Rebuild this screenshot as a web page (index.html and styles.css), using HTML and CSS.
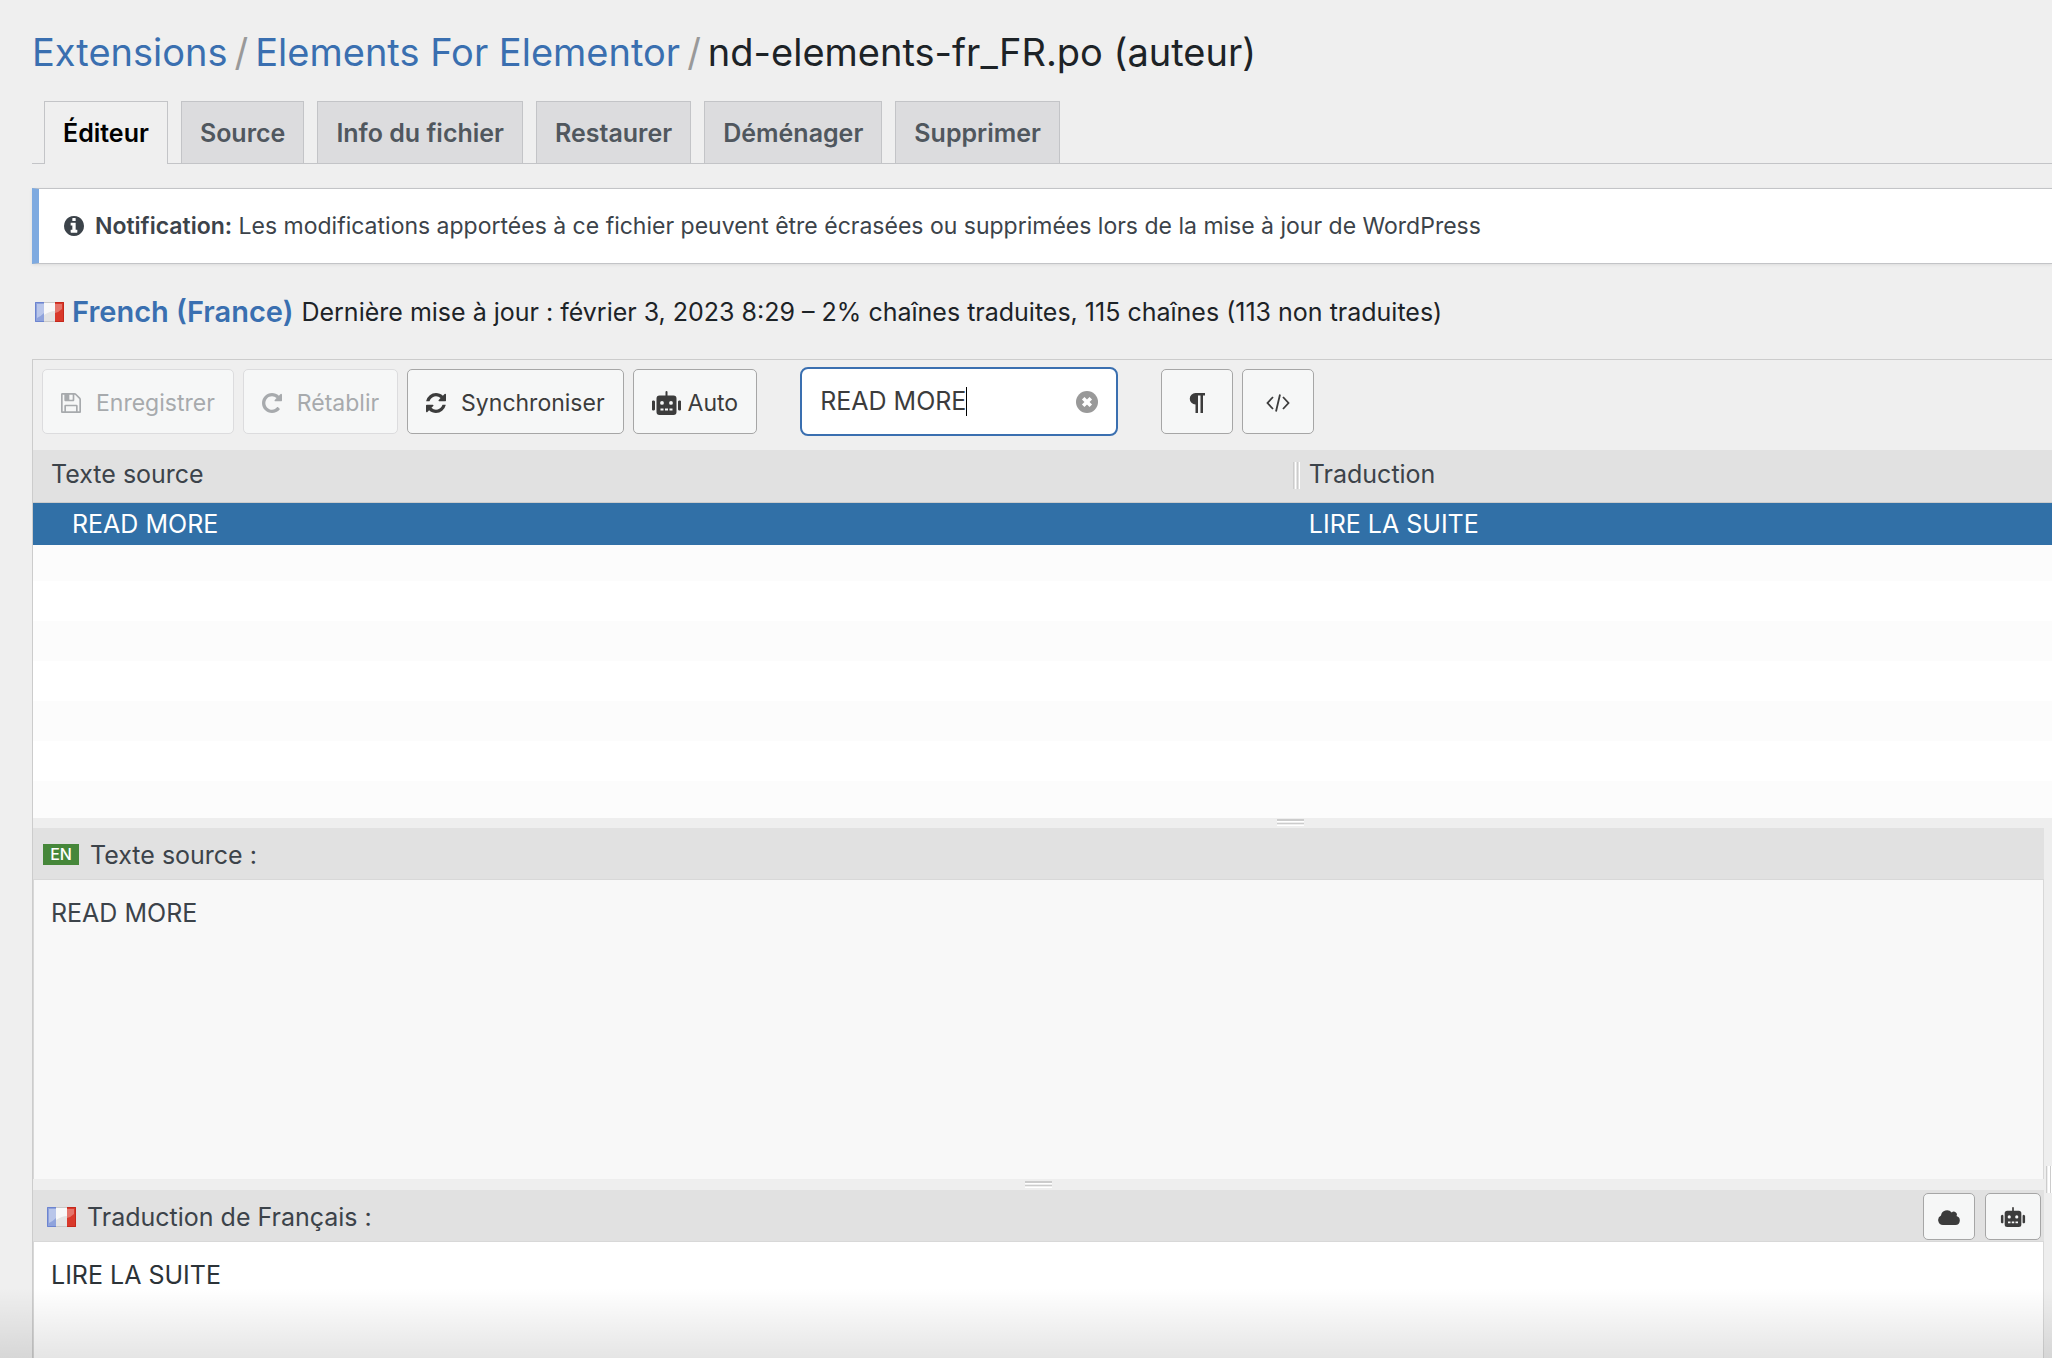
FILE: index.html
```html
<!DOCTYPE html>
<html lang="fr">
<head>
  <meta charset="UTF-8" />
  <meta name="viewport" content="width=device-width, initial-scale=1.0"/>
  <title>nd-elements-fr_FR.po (auteur)</title>
  <link rel="stylesheet" href="styles.css">
</head>
<body>

  <!-- shared icons -->
  <svg class="sprite" aria-hidden="true">
    <symbol id="robot" viewBox="0 0 29 24">
      <path fill-rule="evenodd" d="M13.500 1a1 1 0 0 1 2 0v3.500h6a3 3 0 0 1 3 3V21a3 3 0 0 1-3 3h-14a3 3 0 0 1-3-3V7.500a3 3 0 0 1 3-3h6zM10 10a1.900 1.900 0 1 0 0 3.800 1.900 1.900 0 0 0 0-3.800zm9 0a1.900 1.900 0 1 0 0 3.800 1.900 1.900 0 0 0 0-3.800zM8.500 17.500v2h3v-2zm4.500 0v2h3v-2zm4.500 0v2h3v-2zM0 11.500a1.500 1.500 0 0 1 3-1v8a1.500 1.500 0 0 1-3-1zM26 10.500a1.500 1.500 0 0 1 3 1v6a1.500 1.500 0 0 1-3 1z"/>
    </symbol>
    <symbol id="flag-fr" viewBox="0 0 29 20">
      <rect width="10" height="20" fill="#8fa3dc"/>
      <rect x="9" width="11" height="20" fill="#e4e4e4"/>
      <path d="M9 1h11v8q-5 0-11 4z" fill="#f8f8f8"/>
      <rect x="20" width="9" height="20" fill="#d9392b"/>
      <path d="M2 2h7v9q-4 4-7 5z" fill="#b9c6ea"/>
      <path d="M20 2h7v5q-3 3-7 4z" fill="#e5756b"/>
      <path d="M9 .5h11M9 19.500h11" stroke="#c9c9c9"/>
      <path d="M9 .5H.5v19H9" fill="none" stroke="#6c84d0"/>
      <path d="M20 .5h8.500v19H20" fill="none" stroke="#c4281c"/>
    </symbol>
  </svg>

  <h1>
    <a href="#">Extensions</a>
    <span class="sep">/</span>
    <a href="#">Elements For Elementor</a>
    <span class="sep">/</span>
    <span>nd-elements-fr_FR.po (auteur)</span>
  </h1>

  <nav class="tabs">
    <a href="#" class="tab active">Éditeur</a>
    <a href="#" class="tab">Source</a>
    <a href="#" class="tab">Info du fichier</a>
    <a href="#" class="tab">Restaurer</a>
    <a href="#" class="tab">Déménager</a>
    <a href="#" class="tab">Supprimer</a>
  </nav>

  <div class="notice">
    <svg class="icon" viewBox="0 128 1536 1536"><path d="M1024 1376v-160q0-14-9-23t-23-9h-96v-512q0-14-9-23t-23-9h-320q-14 0-23 9t-9 23v160q0 14 9 23t23 9h96v320h-96q-14 0-23 9t-9 23v160q0 14 9 23t23 9h448q14 0 23-9t9-23zm-128-896v-160q0-14-9-23t-23-9h-192q-14 0-23 9t-9 23v160q0 14 9 23t23 9h192q14 0 23-9t9-23zm640 416q0 209-103 385.500t-279.500 279.500-385.500 103-385.500-103-279.500-279.500-103-385.500 103-385.500 279.500-279.500 385.500-103 385.500 103 279.500 279.500 103 385.500z"/></svg>
    <p><strong>Notification:</strong> Les modifications apportées à ce fichier peuvent être écrasées ou supprimées lors de la mise à jour de WordPress</p>
  </div>

  <div class="locale">
    <svg class="flag"><use href="#flag-fr"/></svg>
    <h2><a href="#">French (France)</a></h2>
    <p>Dernière mise à jour : février 3, 2023 8:29 – 2% chaînes traduites, 115 chaînes (113 non traduites)</p>
  </div>

  <main class="editor">
    <form class="toolbar" onsubmit="return false">
      <button type="button" disabled>
        <svg class="icon" viewBox="0 128 1536 1536"><path d="M384 1536h768v-384h-768v384zm896 0h128v-896q0-14-10-38.500t-20-34.500l-281-281q-10-10-34-20t-39-10v416q0 40-28 68t-68 28h-576q-40 0-68-28t-28-68v-416h-128v1280h128v-416q0-40 28-68t68-28h832q40 0 68 28t28 68v416zm-384-928v-320q0-13-9.500-22.500t-22.500-9.500h-192q-13 0-22.500 9.500t-9.500 22.500v320q0 13 9.500 22.500t22.500 9.500h192q13 0 22.500-9.500t9.500-22.500zm640 32v928q0 40-28 68t-68 28h-1344q-40 0-68-28t-28-68v-1344q0-40 28-68t68-28h928q40 0 88 20t76 48l280 280q28 28 48 76t20 88z"/></svg>
        <span>Enregistrer</span>
      </button>
      <button type="button" disabled>
        <svg class="icon" viewBox="0 128 1536 1536"><path d="M1536 256v448q0 26-19 45t-45 19h-448q-42 0-59-40-17-39 14-69l138-138q-148-137-349-137-104 0-198.500 40.500t-163.500 109.500-109.500 163.500-40.500 198.500 40.500 198.500 109.500 163.500 163.500 109.500 198.500 40.500q119 0 225-52t179-147q7-10 23-12 15 0 25 9l137 138q9 8 9.500 20.500t-7.500 22.500q-109 132-264 204.500t-327 72.500q-156 0-298-61t-245-164-164-245-61-298 61-298 164-245 245-164 298-61q147 0 284.500 55.500t244.500 156.500l130-129q29-31 70-14 39 17 39 59z"/></svg>
        <span>Rétablir</span>
      </button>
      <button type="button">
        <svg class="icon" viewBox="0 128 1536 1536"><path d="M1511 1056q0 5-1 7-64 268-268 434.500t-478 166.500q-146 0-282.500-55t-243.500-157l-129 129q-19 19-45 19t-45-19-19-45v-448q0-26 19-45t45-19h448q26 0 45 19t19 45-19 45l-137 137q71 66 161 102t187 36q134 0 250-65t186-179q11-17 53-117 8-23 30-23h192q13 0 22.500 9.500t9.500 22.500zm25-800v448q0 26-19 45t-45 19h-448q-26 0-45-19t-19-45 19-45l138-138q-148-137-349-137-134 0-250 65t-186 179q-11 17-53 117-8 23-30 23h-199q-13 0-22.500-9.500t-9.500-22.500v-7q65-268 270-434.500t480-166.500q146 0 284 55.500t245 156.500l130-129q19-19 45-19t45 19 19 45z"/></svg>
        <span>Synchroniser</span>
      </button>
      <button type="button" class="auto">
        <svg class="robot"><use href="#robot"/></svg>
        <span>Auto</span>
      </button>

      <div class="search">
        <input type="text" value="READ MORE" aria-label="Filtrer les traductions" />
        <span class="caret"></span>
        <button type="button" class="clear" aria-label="Effacer">
          <svg viewBox="0 0 22 22"><circle cx="11" cy="11" r="11" fill="#999"/><path d="M7.200 7.200l7.600 7.600m0-7.600l-7.600 7.600" stroke="#fff" stroke-width="3.600"/></svg>
        </button>
      </div>

      <button type="button" class="square" aria-label="Invisibles">
        <svg class="icon" viewBox="0 0 20 20"><path d="M18 0v2.500h-2V20h-2.500V2.500H11V20H8.500v-8.500A5.700 5.700 0 0 1 8.500 0z"/></svg>
      </button>
      <button type="button" class="square" aria-label="Code">
        <svg class="code" viewBox="0 0 24 20"><path d="M7 4L1.500 10 7 16M17 4l5.500 6-5.500 6M14 1.500l-4 17" fill="none" stroke="#3c3c3c" stroke-width="1.800"/></svg>
      </button>
    </form>

    <div class="list">
      <table>
        <thead>
          <tr>
            <th class="col-source">Texte source</th>
            <th class="col-target">Traduction</th>
          </tr>
        </thead>
        <tbody>
          <tr>
            <td class="first">READ MORE</td>
            <td>LIRE LA SUITE</td>
          </tr>
        </tbody>
      </table>
    </div>

    <div class="split split-list"><span class="grip"></span></div>

    <div class="panels">
      <div class="fields">
        <section class="field">
          <div class="field-head">
            <span class="lang">EN</span>
            <label for="source">Texte source :</label>
          </div>
          <textarea id="source" class="source" readonly>READ MORE</textarea>
        </section>

        <div class="split"><span class="grip"></span></div>

        <section class="field field-target">
          <div class="field-head">
            <svg class="flag"><use href="#flag-fr"/></svg>
            <label for="target">Traduction de Français :</label>
            <div class="tools">
              <button type="button" aria-label="Suggestions">
                <svg class="cloud" viewBox="0 0 22 16"><path d="M5 16a5 5 0 0 1-2-9.500A6 6 0 0 1 13.700 3.500 3 3 0 0 1 18.500 7 4.600 4.600 0 0 1 17.500 16z"/></svg>
              </button>
              <button type="button" aria-label="Traduction automatique">
                <svg class="robot"><use href="#robot"/></svg>
              </button>
            </div>
          </div>
          <textarea id="target">LIRE LA SUITE</textarea>
        </section>
      </div>
      <div class="side"><span class="grip-side"></span></div>
    </div>
  </main>

  <div class="fade"></div>

</body>
</html>
```

FILE: styles.css
```css
* {
  box-sizing: border-box;
}
body {
  margin: 0;
  padding: 28px 0 0 32px;
  min-height: 100vh;
  display: flex;
  flex-direction: column;
  overflow: hidden;
  position: relative;
  background: #efefef;
  color: #1d2327;
  font-family: Inter, "Liberation Sans", sans-serif;
  font-size: 25px;
  line-height: 32px;
}
h1, h2, p {
  margin: 0;
}
a {
  color: #3a6fb0;
  text-decoration: none;
}
svg {
  display: block;
  flex: none;
  fill: currentColor;
}
.sprite {
  position: absolute;
  width: 0;
  height: 0;
}
.icon {
  width: 20px;
  height: 20px;
}
.robot {
  width: 29px;
  height: 24px;
}
.flag {
  width: 29px;
  height: 20px;
}

h1 {
  display: flex;
  gap: 7px;
  font-size: 38px;
  font-weight: 400;
  line-height: 48px;
}
.sep {
  color: #999;
}

/* tabs */
.tabs {
  display: flex;
  gap: 13px;
  margin-top: 25px;
  padding-left: 12px;
  border-bottom: 1px solid #c3c4c7;
}
.tab {
  padding: 15px 18px 14px;
  border: 1px solid #c3c4c7;
  border-bottom: 0;
  background: #dcdcde;
  color: #50575e;
  font-weight: 600;
}
.tab.active {
  margin-bottom: -1px;
  background: #efefef;
  color: #000;
}

.notice {
  display: flex;
  align-items: center;
  gap: 11px;
  height: 76px;
  margin-top: 24px;
  padding-left: 25px;
  border: 1px solid #c3c4c7;
  border-left: 7px solid #7eaae0;
  border-right: 0;
  background: #fff;
  box-shadow: 0 1px 3px rgba(0,0,0,0.08);
  color: #3c434a;
  font-size: 23px;
}
.notice strong {
  font-weight: 600;
}

.locale {
  display: flex;
  align-items: center;
  gap: 8px;
  margin: 32px 0 31px;
  padding-left: 3px;
}
.locale h2 {
  font-size: 29px;
  font-weight: 600;
}

/* editor */
.editor {
  flex: 1;
  display: flex;
  flex-direction: column;
  border-top: 1px solid #ccc;
  border-left: 1px solid #ccc;
}
.toolbar {
  display: flex;
  align-items: center;
  gap: 9px;
  height: 90px;
  padding: 0 9px 8px;
}
button {
  display: flex;
  align-items: center;
  justify-content: center;
  gap: 15px;
  padding: 0 18px;
  border: 1px solid #a6a6a6;
  border-radius: 5px;
  background: #f6f7f7;
  color: #3c3c3c;
  font-family: inherit;
  font-size: 23px;
}
.toolbar > button {
  height: 65px;
  padding-top: 4px;
}
button:disabled {
  border-color: #dcdcde;
  color: #a7aaad;
}
.toolbar .auto {
  gap: 7px;
}
.toolbar .square {
  width: 72px;
}
.code {
  width: 24px;
  height: 20px;
}
.search {
  position: relative;
  width: 318px;
  margin: 0 34px;
}
.search input {
  display: block;
  width: 100%;
  height: 69px;
  padding: 0 52px 0 18px;
  border: 2px solid #3a6fb0;
  border-radius: 8px;
  outline: 0;
  background: #fff;
  color: #3c3c3c;
  font-family: inherit;
  font-size: 25px;
}
.caret {
  position: absolute;
  top: 20px;
  left: 166px;
  width: 1px;
  height: 29px;
  background: #000;
}
.clear {
  position: absolute;
  top: 24px;
  right: 20px;
  width: 22px;
  height: 22px;
  padding: 0;
  border: 0;
  background: none;
}
.clear svg {
  width: 22px;
  height: 22px;
}

.list {
  height: 368px;
  background: repeating-linear-gradient(#fcfcfc 0 40px, #fff 40px 80px) 0 11px;
}
table {
  width: 100%;
  table-layout: fixed;
  border-collapse: separate;
  border-spacing: 0;
}
th {
  height: 53px;
  padding: 0 16px 4px 18px;
  border-bottom: 1px solid #ccc;
  background: #e1e1e1;
  color: #3c434a;
  font-weight: 400;
  text-align: left;
}
.col-source {
  width: 62.400%;
}
.col-target {
  padding-left: 16px;
  background: linear-gradient(90deg, #ccc 1px, #e1e1e1 1px 2px, #fff 2px 3px, #ccc 4px 5px, #e1e1e1 5px 6px, #fff 6px 7px, #e1e1e1 7px) 0 12px / 100% 27px no-repeat #e1e1e1;
}
td {
  height: 42px;
  padding: 0 16px;
  background: #3170a7;
  color: #fff;
}
td.first {
  padding-left: 39px;
}

.split {
  display: flex;
  justify-content: center;
  height: 11px;
  padding-top: 2px;
  background: #eee;
}
.split-list {
  justify-content: flex-start;
  height: 10px;
  padding-top: 1px;
  padding-left: 61.600%;
}
.grip {
  width: 27px;
  height: 7px;
  background: linear-gradient(#ccc 0 2px, #fff 2px 3px, #eee 3px 4px, #ccc 4px 5px, #eee 5px 6px, #fff 6px);
}
.panels {
  flex: 1;
  display: flex;
}
.fields {
  flex: 1;
  display: flex;
  flex-direction: column;
}
.field {
  display: flex;
  flex-direction: column;
}
.field-target {
  flex: 1;
}
.field-head {
  display: flex;
  align-items: center;
  gap: 11px;
  height: 52px;
  padding: 2px 3px 0 10px;
  border-bottom: 1px solid #d8d8d8;
  background: #e1e1e1;
  color: #3c434a;
}
.field-head .flag {
  margin-left: 4px;
}
.lang {
  width: 36px;
  background: #46873a;
  color: #fff;
  font-size: 16px;
  font-weight: 500;
  line-height: 21px;
  text-align: center;
}
.tools {
  display: flex;
  gap: 10px;
  margin-left: auto;
}
.tools button {
  height: 47px;
  padding: 0 14px;
}
.tools .robot {
  width: 26px;
  height: 20px;
}
.cloud {
  width: 22px;
  height: 16px;
}
textarea {
  flex: 1;
  padding: 17px 17px;
  border: 1px solid #d8d8d8;
  border-width: 0 1px;
  outline: 0;
  resize: none;
  background: #fff;
  color: #2c3338;
  font-family: inherit;
  font-size: 25px;
  line-height: 32px;
}
textarea.source {
  height: 299px;
  flex: none;
  background: #f8f8f8;
  color: #3c434a;
}
.side {
  width: 8px;
  padding: 338px 0 0 2px;
  background: #eee;
}
.grip-side {
  display: block;
  width: 6px;
  height: 27px;
  background: linear-gradient(90deg, #ccc 0 1px, #eee 1px 2px, #fff 2px 4px, #ccc 4px 5px, #fff 5px);
}

/* shade over the bottom edge */
.fade {
  position: absolute;
  left: 0;
  right: 0;
  bottom: 0;
  height: 70px;
  background: linear-gradient(rgba(0,0,0,0), rgba(0,0,0,0.1));
  pointer-events: none;
}
```
